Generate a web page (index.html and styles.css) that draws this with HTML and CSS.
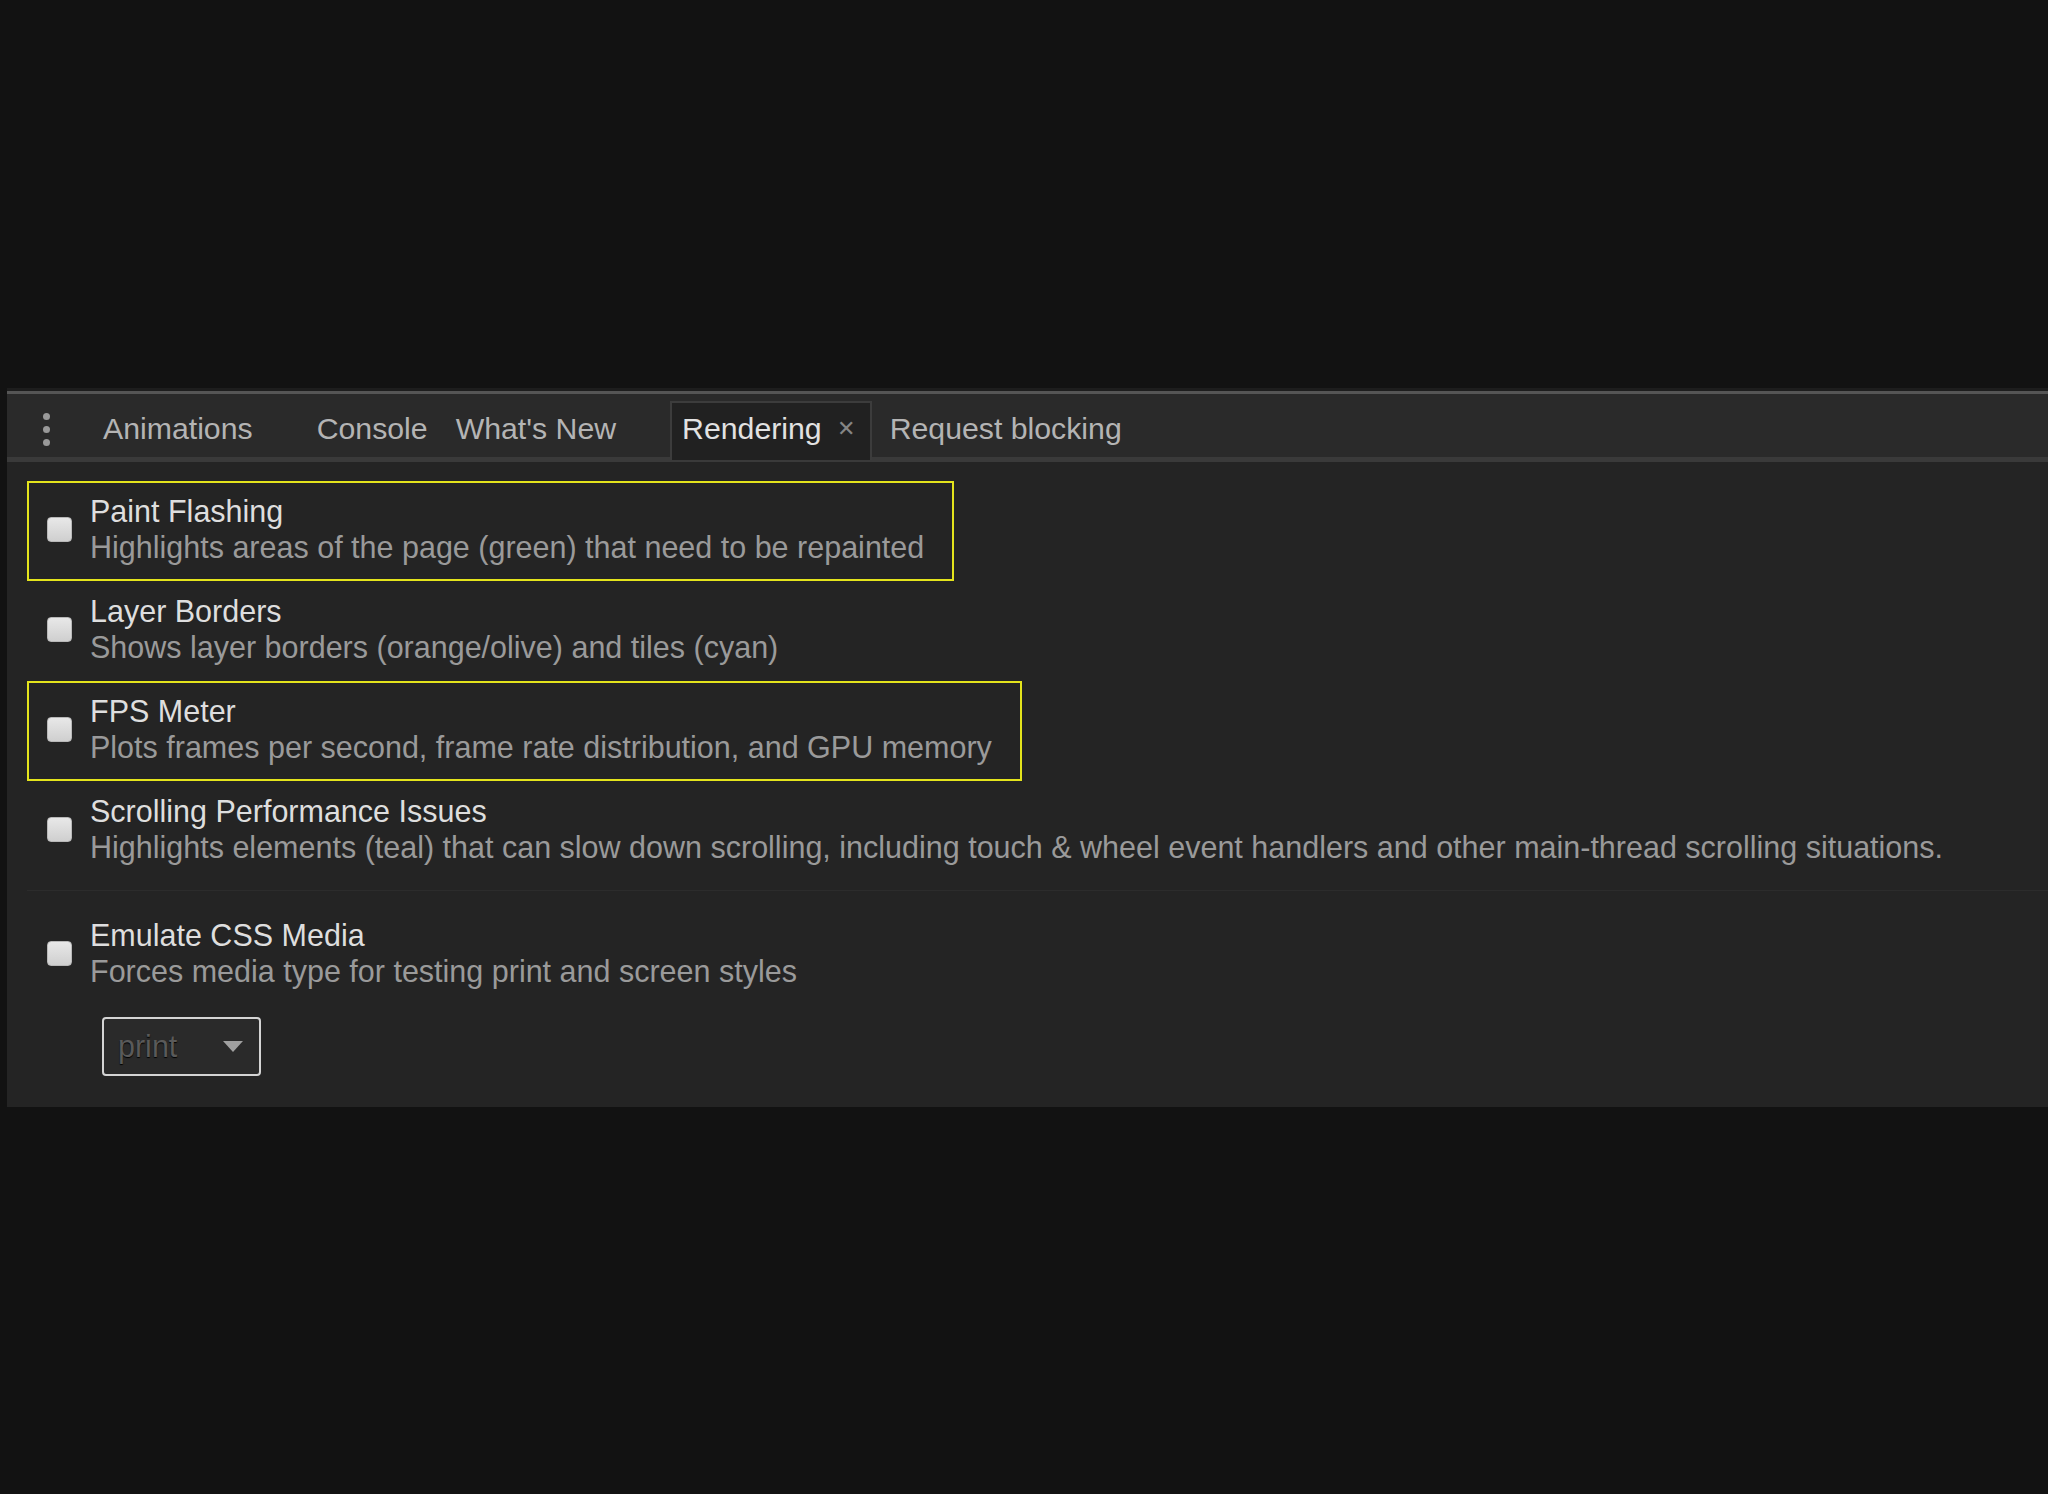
FILE: index.html
```html
<!DOCTYPE html>
<html lang="en">
<head>
    <meta charset="UTF-8">
    <title>Rendering</title>
    <link rel="stylesheet" href="styles.css">
</head>
<body>
    <div class="panel">
        <div class="tabbar">
            <div class="menu-button">
                <span class="dot"></span>
                <span class="dot"></span>
                <span class="dot"></span>
            </div>
            <div class="tab closeable">Animations<span class="close">&#x2715;</span></div>
            <div class="tab">Console</div>
            <div class="tab closeable">What's New<span class="close">&#x2715;</span></div>
            <div class="tab closeable selected">Rendering<span class="close">&#x2715;</span></div>
            <div class="tab">Request blocking</div>
        </div>

        <div class="content">
            <div class="option highlight">
                <span class="checkbox"></span>
                <div class="option-text">
                    <div class="title">Paint Flashing</div>
                    <div class="desc">Highlights areas of the page (green) that need to be repainted</div>
                </div>
            </div>

            <div class="option">
                <span class="checkbox"></span>
                <div class="option-text">
                    <div class="title">Layer Borders</div>
                    <div class="desc">Shows layer borders (orange/olive) and tiles (cyan)</div>
                </div>
            </div>

            <div class="option highlight">
                <span class="checkbox"></span>
                <div class="option-text">
                    <div class="title">FPS Meter</div>
                    <div class="desc">Plots frames per second, frame rate distribution, and GPU memory</div>
                </div>
            </div>

            <div class="option">
                <span class="checkbox"></span>
                <div class="option-text">
                    <div class="title">Scrolling Performance Issues</div>
                    <div class="desc">Highlights elements (teal) that can slow down scrolling, including touch &amp; wheel event handlers and other main-thread scrolling situations.</div>
                </div>
            </div>

            <div class="separator"></div>

            <div class="option">
                <span class="checkbox"></span>
                <div class="option-text">
                    <div class="title">Emulate CSS Media</div>
                    <div class="desc">Forces media type for testing print and screen styles</div>
                </div>
            </div>

            <div class="media-select">
                <span>print</span>
                <span class="arrow"></span>
            </div>
        </div>
    </div>
</body>
</html>
```

FILE: styles.css
```css
html, body {
    margin: 0;
    padding: 0;
}

body {
    background-color: #121212;
    font-family: "Liberation Sans", Arial, sans-serif;
    font-size: 30.5px;
    overflow: hidden;
    height: 1494px;
}

.panel {
    margin-top: 388px;
    margin-left: 7px;
    background-color: #242424;
    border-top: 3px solid #1d1d1d;
}

/* Tab strip */
.tabbar {
    display: flex;
    gap: 8px;
    height: 63px;
    background-color: #2a2a2a;
    border-top: 3px solid #555;
    border-bottom: 5px solid #3a3a3a;
    font-size: 30.25px;
}

.menu-button {
    width: 78px;
    display: flex;
    flex-direction: column;
    align-items: center;
    justify-content: center;
    gap: 6px;
    padding-top: 7px;
    box-sizing: border-box;
}

.menu-button .dot {
    width: 7px;
    height: 7px;
    border-radius: 50%;
    background-color: #999;
}

.tab {
    display: flex;
    align-items: center;
    margin-top: 7px;
    padding: 0 10px;
    color: #b4b4b4;
    white-space: nowrap;
}

.tab .close {
    display: inline-block;
    width: 24px;
    margin-left: 12px;
    font-size: 22px;
    color: #858585;
    text-align: center;
    visibility: hidden;
}

.tab.selected {
    margin-bottom: -3px;
    padding-right: 12px;
    padding-bottom: 5px;
    background-color: #212121;
    border: 2px solid #3c3c3c;
    border-bottom: none;
    color: #e2e2e2;
}

.tab.selected .close {
    visibility: visible;
}

/* Rendering options */
.content {
    padding: 19px 0 31px 20px;
}

.option {
    display: flex;
    align-items: center;
    width: fit-content;
    padding: 10px 28px 14px 18px;
    border: 2px solid transparent;
}

.option.highlight {
    border-color: #e4e41c;
}

.checkbox {
    flex: none;
    width: 25px;
    height: 25px;
    margin-right: 18px;
    box-sizing: border-box;
    border-radius: 4px;
    border: 1px solid #b8b8b8;
    background: linear-gradient(#e8e8e8, #cfcfcf);
}

.option-text {
    line-height: 36px;
    white-space: nowrap;
}

.title {
    color: #dedede;
}

.desc {
    color: #9a9a9a;
}

.separator {
    height: 1px;
    margin: 9px 0 14px 0;
    background-color: #2c2c2c;
}

.media-select {
    display: flex;
    align-items: center;
    justify-content: space-between;
    width: 159px;
    height: 59px;
    box-sizing: border-box;
    margin: 12px 0 0 75px;
    padding: 0 16px 0 14px;
    border: 2px solid #d4d4d4;
    border-radius: 4px;
    background-color: #2a2a2a;
    color: #5a5a5a;
    text-shadow: 0 1px 1px #000;
}

.media-select .arrow {
    width: 0;
    height: 0;
    border-left: 10px solid transparent;
    border-right: 10px solid transparent;
    border-top: 11px solid #a0a0a0;
}
```
